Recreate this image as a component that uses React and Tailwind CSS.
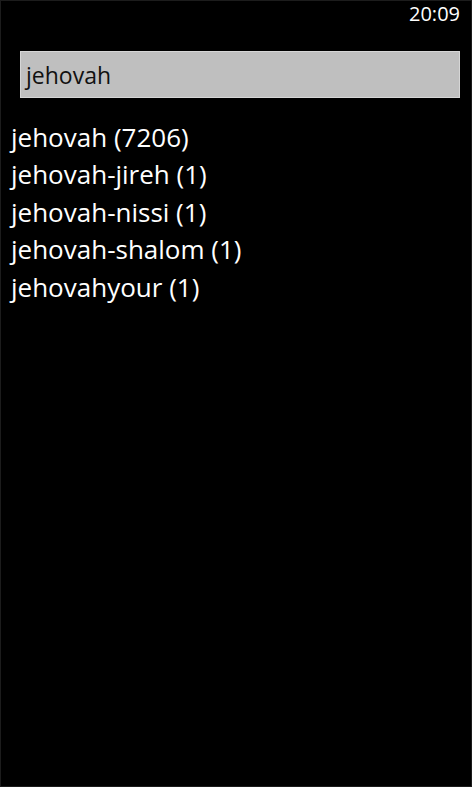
import React from 'react';

const results = [
  { word: 'jehovah', count: 7206 },
  { word: 'jehovah-jireh', count: 1 },
  { word: 'jehovah-nissi', count: 1 },
  { word: 'jehovah-shalom', count: 1 },
  { word: 'jehovahyour', count: 1 },
];

export default function App() {
  return (
    <div className="w-[472px] h-[787px] bg-black border border-[#1c1c1c] overflow-hidden font-['Open_Sans',sans-serif]">
      {/* status bar */}
      <div className="flex justify-end pt-[3px] pr-[11px] text-[20px] leading-[20px] text-white">
        20:09
      </div>

      {/* search box */}
      <div className="mt-[27px] ml-[19px] mr-[11px] h-[47px] bg-[#bfbfbf] border border-[#d6d6d6] pl-[5px] pt-[1px] text-[23px] leading-[45px] text-[#111]">
        jehovah
      </div>

      {/* results */}
      <ul className="mt-[21px] pl-[10px] text-white text-[26px] leading-[37.4px]">
        {results.map((r) => (
          <li key={r.word}>
            {r.word} ({r.count})
          </li>
        ))}
      </ul>
    </div>
  );
}
